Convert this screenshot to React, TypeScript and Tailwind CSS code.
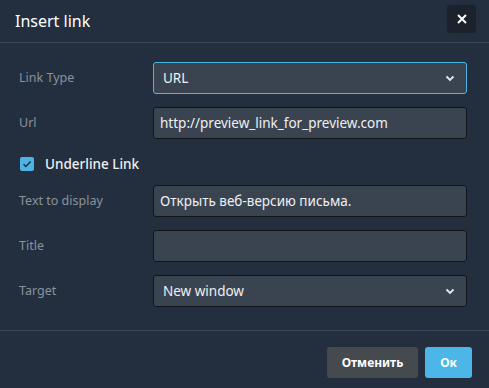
import React from 'react';

const Chevron = () => (
  <svg className="w-[10px] h-[10px] text-gray-200" viewBox="0 0 10 10" fill="none">
    <path d="M1.5 3.5L5 7l3.5-3.5" stroke="currentColor" strokeWidth="1.8" />
  </svg>
);

const Row: React.FC<{ label: string; children: React.ReactNode }> = ({ label, children }) => (
  <div className="flex items-center h-8">
    <div className="w-[153px] shrink-0 pl-[19px] text-[12.5px] text-[#8a929c]">{label}</div>
    <div className="flex-1 h-full">{children}</div>
  </div>
);

const Field: React.FC<{ value?: string; focused?: boolean; select?: boolean; pad?: string }> = ({ value, focused, select, pad = 'pl-[6px]' }) => (
  <div
    className={`h-full flex items-center justify-between rounded-[3px] border bg-[#3a4451] text-[13.5px] text-[#eef0f2] ${pad} pr-[11px] ${
      focused ? 'border-[#4ab6e6]' : 'border-[#121518]'
    }`}
  >
    <span>{value}</span>
    {select && <Chevron />}
  </div>
);

export default function App() {
  return (
    <div className="w-[489px] h-[388px] bg-[#232f3f] flex flex-col" style={{ fontFamily: '"Noto Sans", "Open Sans", sans-serif' }}>
      <div className="h-[43px] flex items-center justify-between border-b border-[#3a4556] pl-[15px] pr-[13px]">
        <h1 className="text-[16px] text-white">Insert link</h1>
        <button className="w-[29px] h-[28px] mb-[4px] rounded-[3px] bg-[#1b222c] flex items-center justify-center">
          <svg className="w-[10px] h-[10px]" viewBox="0 0 10 10">
            <path d="M1 1l8 8M9 1L1 9" stroke="white" strokeWidth="2" />
          </svg>
        </button>
      </div>

      <div className="flex-1 flex flex-col pt-[19px] pr-[22px] gap-[13px] border-b border-[#3a4556]">
        <Row label="Link Type">
          <Field value="URL" focused select pad="pl-[9px]" />
        </Row>
        <Row label="Url">
          <Field value="http://preview_link_for_preview.com" />
        </Row>
        <div className="flex items-center h-5 pl-[20px]">
          <span className="w-[14px] h-[14px] mt-[4px] rounded-[2px] bg-[#4cb3e4] flex items-center justify-center">
            <svg className="w-[10px] h-[10px]" viewBox="0 0 10 10" fill="none">
              <path d="M1.5 5.2l2.3 2.3L8.6 2.6" stroke="#1f2a38" strokeWidth="1.4" />
            </svg>
          </span>
          <span className="ml-[11px] mt-[4px] text-[13.5px] font-medium text-[#eef0f2]">Underline Link</span>
        </div>
        <Row label="Text to display">
          <Field value="Открыть веб-версию письма." />
        </Row>
        <Row label="Title">
          <Field />
        </Row>
        <Row label="Target">
          <Field value="New window" select pad="pl-[9px]" />
        </Row>
      </div>

      <div className="h-[57px] flex items-start justify-end gap-[7px] pt-[16px] pr-[17px]">
        <button className="h-[31px] w-[91px] rounded-[3px] bg-[#454a4f] text-[12px] font-bold text-white">Отменить</button>
        <button className="h-[31px] w-[47px] rounded-[3px] bg-[#4db6e8] text-[12px] font-bold text-white">Ок</button>
      </div>
    </div>
  );
}
